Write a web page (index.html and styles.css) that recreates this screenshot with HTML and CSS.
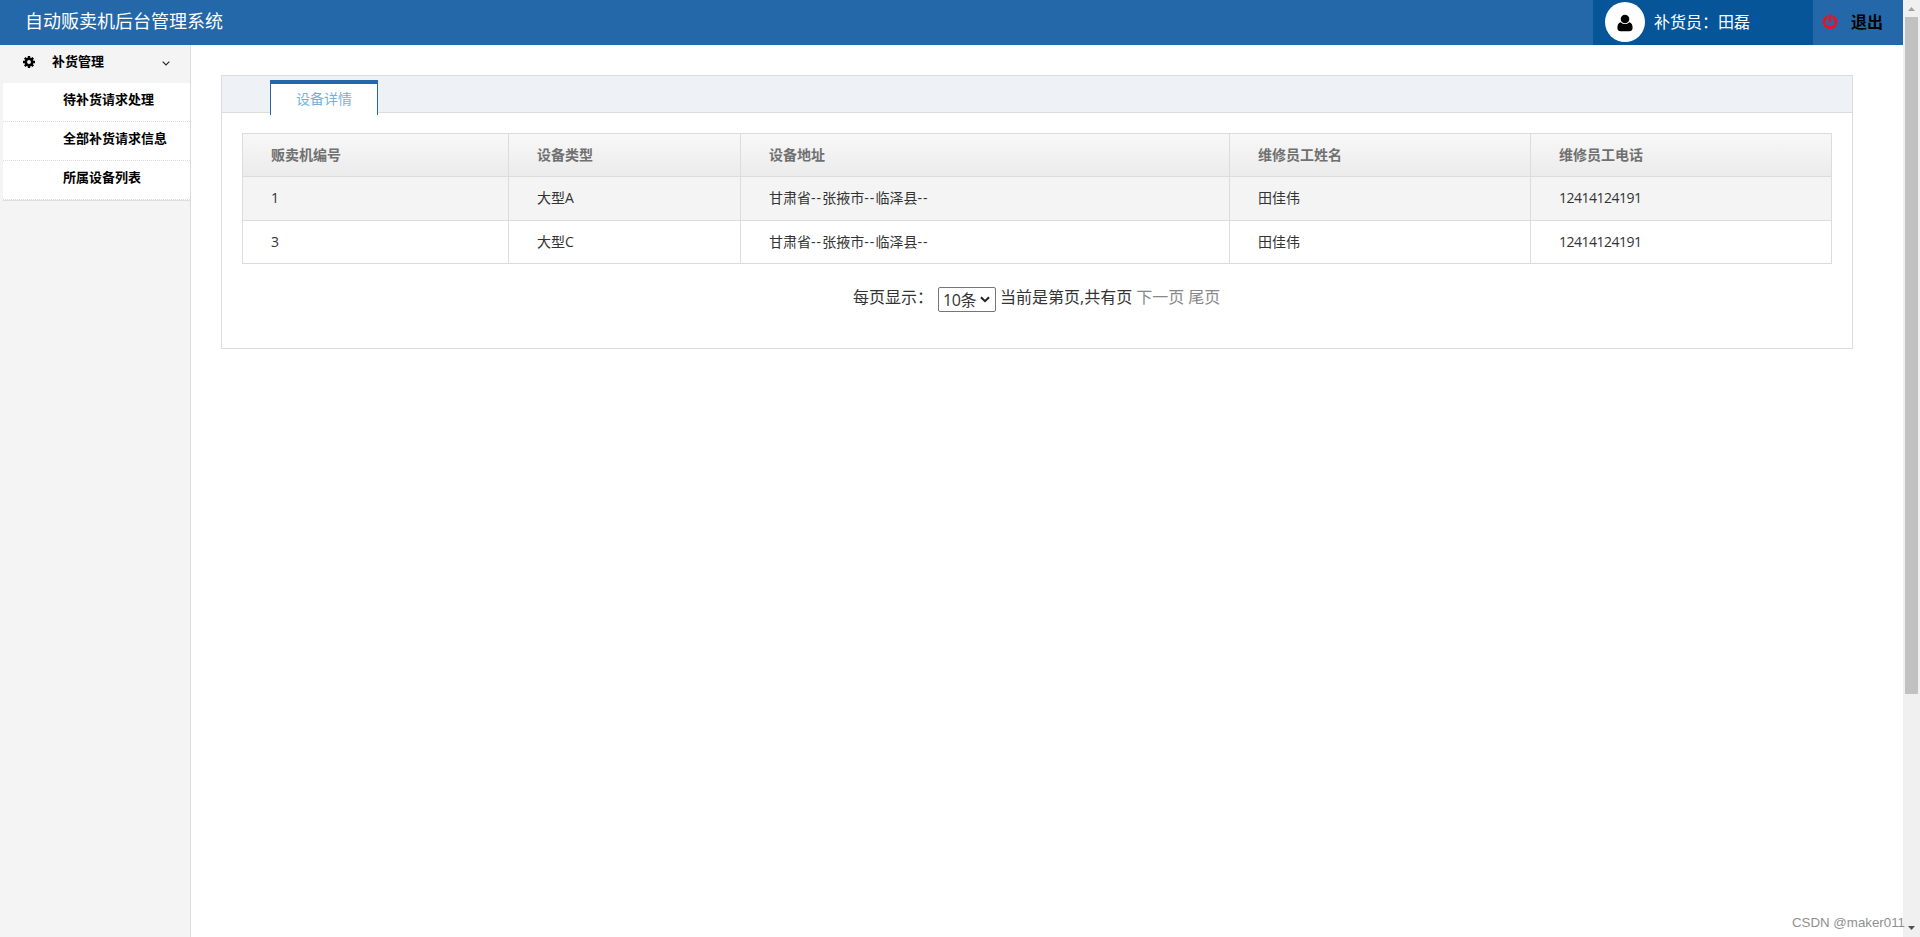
FILE: index.html
```html
<!DOCTYPE html>
<html lang="zh-CN">
<head>
  <meta charset="UTF-8" />
  <title>自动贩卖机后台管理系统</title>
  <link rel="stylesheet" href="styles.css">
</head>
<body>

<div class="page">
  <header>
    <h1>自动贩卖机后台管理系统</h1>
    <div class="user">
      <span class="avatar">
        <svg width="16" height="18" viewBox="0 0 16 18"><circle cx="8" cy="5" r="4.3"/><path d="M3.7 8.2C1.2 8.6.4 11 .4 14c0 2 1.2 3.2 3 3.2h9.2c1.8 0 3-1.2 3-3.2 0-3-.8-5.4-3.3-5.8C11 9.5 9.6 10.1 8 10.1S5 9.5 3.7 8.2z"/></svg>
      </span>
      <span>补货员：田磊</span>
    </div>
    <a class="logout">
      <svg width="16" height="16" viewBox="0 0 16 16"><path d="M4.2 3.2a6 6 0 1 0 7.600 0M8 1.300v6" fill="none" stroke="#ff0a14" stroke-width="2.600" stroke-linecap="round"/></svg>
      <span>退出</span>
    </a>
  </header>

  <div class="main">
    <nav>
      <div class="menu-title">
        <svg class="gear" width="12" height="12" viewBox="0 0 12 12"><circle cx="6" cy="6" r="3.200" fill="none" stroke="#000" stroke-width="2.500"/><path d="M6 0v2.500M6 9.500V12M0 6h2.500M9.500 6H12M1.800 1.800l1.700 1.700M8.500 8.500l1.700 1.700M10.200 1.800L8.500 3.500M3.500 8.500l-1.700 1.700" stroke="#000" stroke-width="2.400"/></svg>
        <span>补货管理</span>
        <svg class="arrow" width="8" height="5" viewBox="0 0 8 5"><path d="M.7.700L4 4 7.300.700" fill="none" stroke="#222" stroke-width="1.100"/></svg>
      </div>
      <ul class="submenu">
        <li>待补货请求处理</li>
        <li>全部补货请求信息</li>
        <li>所属设备列表</li>
      </ul>
    </nav>

    <div class="content">
      <div class="panel">
        <div class="tabs"><div class="tab">设备详情</div></div>
        <table>
          <colgroup>
            <col class="col-id"><col class="col-type"><col class="col-addr"><col class="col-name"><col class="col-tel">
          </colgroup>
          <thead>
            <tr><th>贩卖机编号</th><th>设备类型</th><th>设备地址</th><th>维修员工姓名</th><th>维修员工电话</th></tr>
          </thead>
          <tbody>
            <tr><td>1</td><td>大型A</td><td class="addr">甘肃省<i>--</i>张掖市<i>--</i>临泽县<i>--</i></td><td>田佳伟</td><td class="tel">12414124191</td></tr>
            <tr><td>3</td><td>大型C</td><td class="addr">甘肃省<i>--</i>张掖市<i>--</i>临泽县<i>--</i></td><td>田佳伟</td><td class="tel">12414124191</td></tr>
          </tbody>
        </table>
        <div class="pager">
          <span class="size-label">每页显示：</span>
          <span class="select"><span>10条</span><svg width="10" height="7" viewBox="0 0 10 7"><path d="M1 1.200l4 4 4-4" fill="none" stroke="#222" stroke-width="2"/></svg></span>
          <span class="state">当前是第页,共有页</span>
          <a>下一页</a>
          <a>尾页</a>
        </div>
      </div>
    </div>
  </div>
</div>

<div class="scrollbar">
  <svg class="up" width="7" height="4" viewBox="0 0 7 4"><path d="M3.500 0L7 4H0z" fill="#a3a3a3"/></svg>
  <div class="thumb"></div>
  <svg class="down" width="7" height="4" viewBox="0 0 7 4"><path d="M0 0h7L3.500 4z" fill="#505050"/></svg>
</div>

<div class="watermark">CSDN @maker011</div>

</body>
</html>
```

FILE: styles.css
```css
* {
  box-sizing: border-box;
}
body {
  margin: 0;
  height: 937px;
  display: flex;
  overflow: hidden;
  background: #fff;
  color: #333;
  font-family: "Open Sans", "Noto Sans CJK SC", sans-serif;
  font-size: 14px;
}
svg {
  display: block;
  flex: none;
}
.page {
  flex: 1;
  display: flex;
  flex-direction: column;
}
header {
  height: 45px;
  display: flex;
  background: #2468a9;
  color: #fff;
}
h1 {
  flex: 1;
  margin: 0;
  padding-left: 25px;
  font-size: 18px;
  font-weight: normal;
  line-height: 42px;
}
.user {
  width: 220px;
  padding: 2px 0 0 12px;
  display: flex;
  background: #065598;
  font-size: 16px;
  line-height: 40px;
}
.avatar {
  width: 40px;
  height: 40px;
  margin-right: 9px;
  padding: 12px;
  border-radius: 50%;
  background: #fff;
}
.logout {
  width: 90px;
  padding-left: 9px;
  display: flex;
  color: #000;
  font-size: 16px;
  font-weight: bold;
  line-height: 44px;
}
.logout svg {
  margin: 14px 13px 0 0;
}

.main {
  flex: 1;
  display: flex;
}
nav {
  width: 191px;
  border-right: 1px solid #dcdcdc;
  background: #f4f4f4;
  color: #000;
  font-size: 13px;
  font-weight: bold;
}
.menu-title {
  height: 38px;
  padding-left: 23px;
  display: flex;
  line-height: 33px;
}
.gear {
  margin: 11px 17px 0 0;
}
.arrow {
  margin: 16px 0 0 58px;
}
.submenu {
  margin: 0 0 0 3px;
  padding: 0;
  list-style: none;
  background: #fff;
  border-bottom: 1px solid #dedede;
}
.submenu li {
  height: 39px;
  padding-left: 60px;
  border-bottom: 1px dotted #dcdcdc;
  line-height: 33px;
}

.content {
  flex: 1;
  padding: 30px 50px 0 30px;
}
.panel {
  height: 274px;
  border: 1px solid #dcdcdc;
}
.tabs {
  height: 37px;
  padding: 4px 0 0 48px;
  border-bottom: 1px solid #dcdcdc;
  background: #eef2f7;
}
.tab {
  width: 108px;
  height: 35px;
  border: 1px solid #2468a9;
  border-top-width: 4px;
  border-bottom: 0;
  background: #fff;
  color: #78b0dc;
  line-height: 30px;
  text-align: center;
}

table {
  width: 1590px;
  margin: 20px 0 0 20px;
  table-layout: fixed;
  border-collapse: collapse;
}
.col-id { width: 266px; }
.col-type { width: 232px; }
.col-addr { width: 489px; }
.col-name { width: 301px; }
.col-tel { width: 301px; }
th, td {
  height: 43px;
  padding: 0 0 0 28px;
  border: 1px solid #dcdcdc;
  line-height: 20px;
  text-align: left;
}
th {
  color: #707070;
}
thead tr {
  background: linear-gradient(#f8f8f8, #ebebeb);
}
tbody tr:first-child {
  background: #f4f4f4;
}
tbody tr:first-child td {
  height: 44px;
  padding-bottom: 2px;
}
.addr i {
  font-style: normal;
  letter-spacing: 1.1px;
}
.tel {
  letter-spacing: -0.5px;
}

.pager {
  margin: 23px 0 0 631px;
  display: flex;
  font-size: 16px;
  line-height: 20px;
}
.size-label {
  width: 85px;
}
.select {
  width: 58px;
  height: 25px;
  padding: 0 5px 0 4px;
  display: flex;
  justify-content: space-between;
  align-items: center;
  border: 1px solid #767676;
  border-radius: 2px;
  letter-spacing: -0.4px;
}
.state {
  margin-left: 4px;
}
.pager a {
  margin-left: 4px;
  color: #888;
}

.scrollbar {
  width: 17px;
  display: flex;
  flex-direction: column;
  align-items: center;
  background: #f0f0f0;
}
.up {
  margin: 7px 0 6px;
}
.thumb {
  width: 13px;
  height: 677px;
  background: #c1c1c1;
}
.down {
  margin-top: auto;
  margin-bottom: 7px;
}
.watermark {
  position: absolute;
  right: 15px;
  bottom: 7px;
  color: #909090;
  font-family: "Liberation Sans", sans-serif;
  font-size: 13.3px;
}
```
